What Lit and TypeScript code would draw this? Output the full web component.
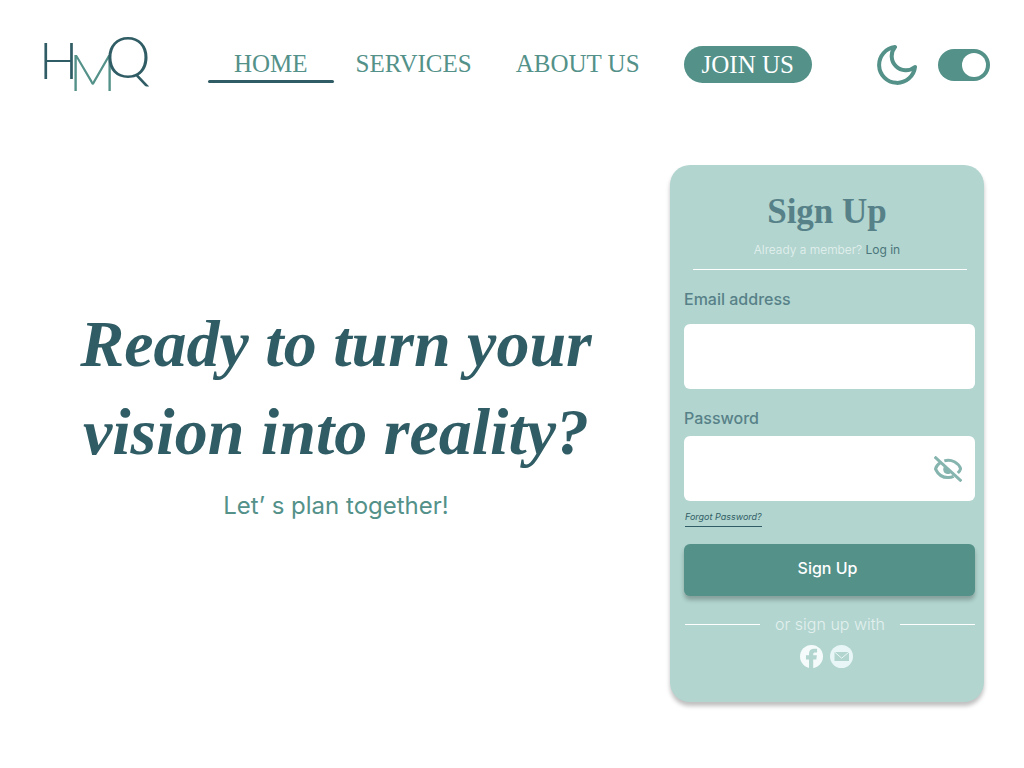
import { LitElement, html, css } from "lit";
import { customElement, state } from "lit/decorators.js";

@customElement("app-root")
export class AppRoot extends LitElement {
  @state() private showPassword = false;

  static styles = css`
    :host {
      --teal: #539189;
      --dark: #305d65;
      --muted: #578188;
      --mint: #b2d5cf;
      display: block;
      min-height: 100vh;
      background: #fff;
      color: var(--dark);
      font-family: Inter, "Liberation Sans", sans-serif;
    }
    *,
    *::before,
    *::after {
      box-sizing: border-box;
    }
    a {
      text-decoration: none;
      color: inherit;
    }
    svg {
      display: block;
    }
    .top {
      display: flex;
      align-items: center;
      padding: 36px 34px 0 43px;
    }
    .logo {
      font-family: Lato, sans-serif;
      font-weight: 300;
      font-size: 52px;
      margin-right: 59px;
    }
    .logo-q {
      font-size: 58px;
    }
    .nav {
      display: flex;
      align-items: flex-end;
      gap: 22px;
      font: 25px/33px "Liberation Serif", serif;
      color: var(--teal);
      white-space: nowrap;
    }
    .link {
      padding: 0 22px 3px 0;
    }
    .link.active {
      padding: 0 26px;
    }
    .link.active::after {
      content: "";
      display: block;
      height: 3px;
      margin: 0 -26px;
      border-radius: 2px;
      background: var(--dark);
    }
    .join {
      padding: 0 18px;
      line-height: 37px;
      border-radius: 20px;
      background: var(--teal);
      color: #fff;
    }
    .theme {
      display: flex;
      align-items: center;
      gap: 21px;
      margin-left: auto;
    }
    .switch {
      appearance: none;
      width: 52px;
      height: 32px;
      margin: 0;
      padding: 4px;
      border-radius: 16px;
      background: var(--teal);
      display: flex;
      cursor: pointer;
    }
    .switch::before {
      content: "";
      width: 24px;
      height: 24px;
      border-radius: 50%;
      background: #fff;
    }
    .switch:checked {
      justify-content: flex-end;
    }
    .main {
      display: grid;
      grid-template-columns: minmax(0, 1fr) 314px;
      align-items: center;
      padding: 72px 40px 48px 0;
    }
    .hero {
      text-align: center;
      padding: 0 0 32px 2px;
    }
    .headline {
      margin: 0;
      font: italic bold 66px/88px "Liberation Serif", serif;
    }
    .tagline {
      margin: 0;
      font-size: 24px;
      line-height: 60px;
      color: var(--teal);
    }
    .card {
      padding: 24px 0 34px;
      border-radius: 20px;
      background: var(--mint);
      box-shadow: 0 4px 4px rgba(0, 0, 0, 0.25);
    }
    .title {
      margin: 0;
      text-align: center;
      font: bold 35px/46px "Liberation Serif", serif;
      color: var(--muted);
    }
    .member {
      margin: 7px 0 11px;
      text-align: center;
      font-size: 12px;
      font-weight: 300;
      line-height: 16px;
      color: #e6f2f0;
    }
    .login {
      color: #4a757b;
      font-weight: 400;
    }
    .rule {
      height: 1px;
      margin: 0 17px 0 23px;
      border: 0;
      background: #fff;
    }
    .form {
      display: flex;
      flex-direction: column;
      padding: 17px 9px 0 14px;
    }
    .label {
      font-size: 16px;
      line-height: 24px;
      font-weight: 500;
      color: var(--muted);
    }
    .field {
      display: flex;
      align-items: center;
      height: 65px;
      margin: 13px 0 17px;
      border-radius: 6px;
      background: #fff;
    }
    .field.password {
      margin: 6px 0;
      padding-right: 13px;
    }
    .input {
      flex: 1;
      min-width: 0;
      height: 100%;
      padding: 0 14px;
      border: 0;
      border-radius: 6px;
      background: none;
      font: 16px Inter, sans-serif;
      color: var(--dark);
    }
    .eye {
      padding: 0;
      border: 0;
      background: none;
      cursor: pointer;
    }
    .forgot {
      align-self: flex-start;
      margin-left: 1px;
      font-size: 9px;
      font-style: italic;
      line-height: 19px;
      border-bottom: 1px solid var(--dark);
    }
    .submit {
      height: 52px;
      margin: 17px 0 16px;
      padding: 0 4px 4px 0;
      border: 0;
      border-radius: 6px;
      background: var(--teal);
      box-shadow: 0 4px 4px rgba(0, 0, 0, 0.25);
      font: 500 16px Inter, sans-serif;
      color: #fff;
      cursor: pointer;
    }
    .or {
      display: flex;
      align-items: center;
      gap: 15px;
      padding-left: 1px;
      font-size: 16px;
      font-weight: 300;
      line-height: 24px;
      color: #e2f0ee;
    }
    .or::before,
    .or::after {
      content: "";
      flex: 1;
      height: 1px;
      background: #fff;
    }
    .social {
      display: flex;
      justify-content: center;
      gap: 7px;
      margin-top: 9px;
      padding-right: 2px;
    }
  `;

  render() {
    return html`
      <header class="top">
        <a class="logo" href="#" aria-label="HMQ">
          <svg width="106" height="57" viewBox="0 0 106 57" overflow="visible">
            <text x="-4" y="43" fill="#305d65">H</text>
            <text x="26" y="55" fill="#539189">M</text>
            <text class="logo-q" x="62" y="42" fill="#305d65">Q</text>
          </svg>
        </a>
        <nav class="nav">
          <a class="link active" href="#">HOME</a>
          <a class="link" href="#">SERVICES</a>
          <a class="link" href="#">ABOUT US</a>
          <a class="join" href="#">JOIN US</a>
        </nav>
        <div class="theme">
          <svg width="40" height="40" viewBox="0 0 40 40" fill="none" stroke="#539189"
            stroke-width="4" stroke-linejoin="round" aria-hidden="true">
            <path d="M18 2A18 18 0 1 0 38 22A14.2 14.2 0 0 1 18 2Z" />
          </svg>
          <input class="switch" type="checkbox" role="switch" aria-label="Dark mode" checked />
        </div>
      </header>

      <main class="main">
        <section class="hero">
          <h1 class="headline">Ready to turn your<br />vision into reality?</h1>
          <p class="tagline">Let’ s plan together!</p>
        </section>

        <section class="card">
          <h2 class="title">Sign Up</h2>
          <p class="member">Already a member? <a class="login" href="#">Log in</a></p>
          <hr class="rule" />
          <form class="form" @submit=${(e: Event) => e.preventDefault()}>
            <label class="label" for="email">Email address</label>
            <div class="field"><input class="input" id="email" type="email" /></div>
            <label class="label" for="password">Password</label>
            <div class="field password">
              <input class="input" id="password" type=${this.showPassword ? "text" : "password"} />
              <button class="eye" type="button" aria-label="Show password"
                @click=${() => (this.showPassword = !this.showPassword)}>
                <svg width="28" height="26" viewBox="0 0 28 26" fill="none" stroke="#86b4ae"
                  stroke-width="3" stroke-linejoin="round">
                  <path d="M10.3 4.9C17.5 2.6 24.5 7 26.6 12.6C26.4 14 25.2 15.6 23.8 17" />
                  <path d="M6.2 6.8C3.5 8.6 2 10.8 1.5 13C4 18.4 8.5 21.6 14 21.6C16 21.6 18 21.2 19.6 20.4" />
                  <path d="M10 10.4C8.2 13.4 9.6 17.8 13.6 18C15.2 18 16.4 17.6 17.2 16.8Z" fill="#86b4ae" stroke="none" />
                  <path d="M.6 .8L27.4 25.2" />
                </svg>
              </button>
            </div>
            <a class="forgot" href="#">Forgot Password?</a>
            <button class="submit" type="submit">Sign Up</button>
            <div class="or">or sign up with</div>
          </form>
          <div class="social">
            <a href="#" aria-label="Facebook">
              <svg width="23" height="23" viewBox="0 0 24 24">
                <circle cx="12" cy="12" r="12" fill="#f5fbfa" />
                <path d="M9.4 24V15H6.2V10.8H9.4V9C9.4 5.8 11.4 4 14.6 4H17.8V7.8H15.8C14.4 7.8 13.8 8.4 13.8 9.6V10.8H17.6L17 15H13.8V24Z" fill="#b2d5cf" />
              </svg>
            </a>
            <a href="#" aria-label="Email">
              <svg width="23" height="23" viewBox="0 0 23 23">
                <circle cx="11.5" cy="11.5" r="11.5" fill="#e9f6f8" />
                <rect x="4.5" y="7" width="14.5" height="9" fill="#b2d5cf" />
                <path d="M4.5 7L11.7 13.2L19 7" fill="none" stroke="#e9f6f8" stroke-width="1" />
              </svg>
            </a>
          </div>
        </section>
      </main>
    `;
  }
}
